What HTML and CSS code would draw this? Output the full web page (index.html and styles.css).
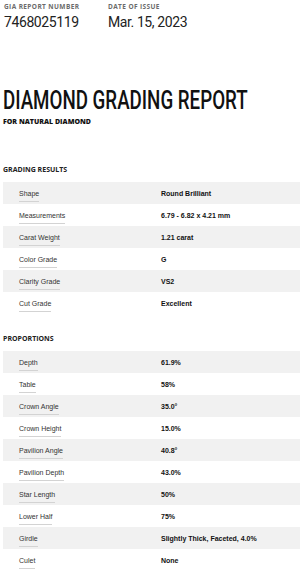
FILE: index.html
```html
<!DOCTYPE html>
<html>
<head>
<meta charset="utf-8">
<link rel="stylesheet" href="styles.css">
</head>
<body>
<div class="top">
  <div class="meta meta-num">
    <div class="meta-label">GIA REPORT NUMBER</div>
    <div class="meta-value">7468025119</div>
  </div>
  <div class="meta">
    <div class="meta-label">DATE OF ISSUE</div>
    <div class="meta-value">Mar. 15, 2023</div>
  </div>
</div>
<h1 class="title"><svg class="title-svg" width="258" height="26" viewBox="0 0 344 26" preserveAspectRatio="none"><text x="0" y="21.5">DIAMOND GRADING REPORT</text></svg></h1>
<div class="subtitle">FOR NATURAL DIAMOND</div>

<h2 class="section">GRADING RESULTS</h2>
<div class="table">
  <div class="row"><span class="k">Shape</span><span class="v">Round Brilliant</span></div>
  <div class="row"><span class="k">Measurements</span><span class="v">6.79 - 6.82 x 4.21 mm</span></div>
  <div class="row"><span class="k">Carat Weight</span><span class="v">1.21 carat</span></div>
  <div class="row"><span class="k">Color Grade</span><span class="v">G</span></div>
  <div class="row"><span class="k">Clarity Grade</span><span class="v">VS2</span></div>
  <div class="row"><span class="k">Cut Grade</span><span class="v">Excellent</span></div>
</div>

<h2 class="section section-2">PROPORTIONS</h2>
<div class="table">
  <div class="row"><span class="k">Depth</span><span class="v">61.9%</span></div>
  <div class="row"><span class="k">Table</span><span class="v">58%</span></div>
  <div class="row"><span class="k">Crown Angle</span><span class="v">35.0°</span></div>
  <div class="row"><span class="k">Crown Height</span><span class="v">15.0%</span></div>
  <div class="row"><span class="k">Pavilion Angle</span><span class="v">40.8°</span></div>
  <div class="row"><span class="k">Pavilion Depth</span><span class="v">43.0%</span></div>
  <div class="row"><span class="k">Star Length</span><span class="v">50%</span></div>
  <div class="row"><span class="k">Lower Half</span><span class="v">75%</span></div>
  <div class="row"><span class="k">Girdle</span><span class="v">Slightly Thick, Faceted, 4.0%</span></div>
  <div class="row"><span class="k">Culet</span><span class="v">None</span></div>
</div>
</body>
</html>
```
FILE: styles.css
```css
html, body {
  margin: 0;
  padding: 0;
  background: #fff;
}
body {
  font-family: "Liberation Sans", Arial, sans-serif;
  color: #222;
  width: 300px;
  overflow: hidden;
}
.top {
  display: flex;
  padding: 3px 0 0 4px;
}
.meta-num {
  width: 104px;
}
.meta-label {
  font-family: "Open Sans", sans-serif;
  font-weight: 700;
  font-size: 6.5px;
  line-height: 8px;
  letter-spacing: 0.4px;
  color: #6b6b6b;
}
.meta-value {
  font-family: Roboto, sans-serif;
  font-size: 14px;
  line-height: 17px;
  margin-top: 3px;
  letter-spacing: -0.4px;
  color: #222;
}
.title {
  margin: 56px 0 0 3px;
  height: 26px;
  font-size: 25px;
  line-height: 26px;
}
.title-svg {
  display: block;
}
.title-svg text {
  font-family: Roboto, sans-serif;
  font-weight: 500;
  font-size: 25px;
  fill: #111;
}
.subtitle {
  margin: 5px 0 0 3px;
  font-family: "Open Sans", sans-serif;
  font-weight: 800;
  font-size: 7px;
  line-height: 8px;
  color: #111;
}
.section {
  margin: 39px 0 0 3px;
  font-family: "Open Sans", sans-serif;
  font-weight: 700;
  font-size: 7px;
  line-height: 9px;
  color: #222;
}
.section-2 {
  margin-top: 20px;
}
.table {
  margin: 8px 0 0 3px;
}
.row {
  display: grid;
  grid-template-columns: 158px 1fr;
  align-items: center;
  height: 22px;
  font-size: 7px;
}
.row:nth-child(odd) {
  background: #f1f1f1;
}
.k {
  justify-self: start;
  margin: 4px 0 0 16px;
  padding-bottom: 3px;
  line-height: 9px;
  border-bottom: 1px solid #d3d3d3;
  color: #333;
}
.v {
  font-weight: 700;
  line-height: 9px;
  color: #111;
}
```
